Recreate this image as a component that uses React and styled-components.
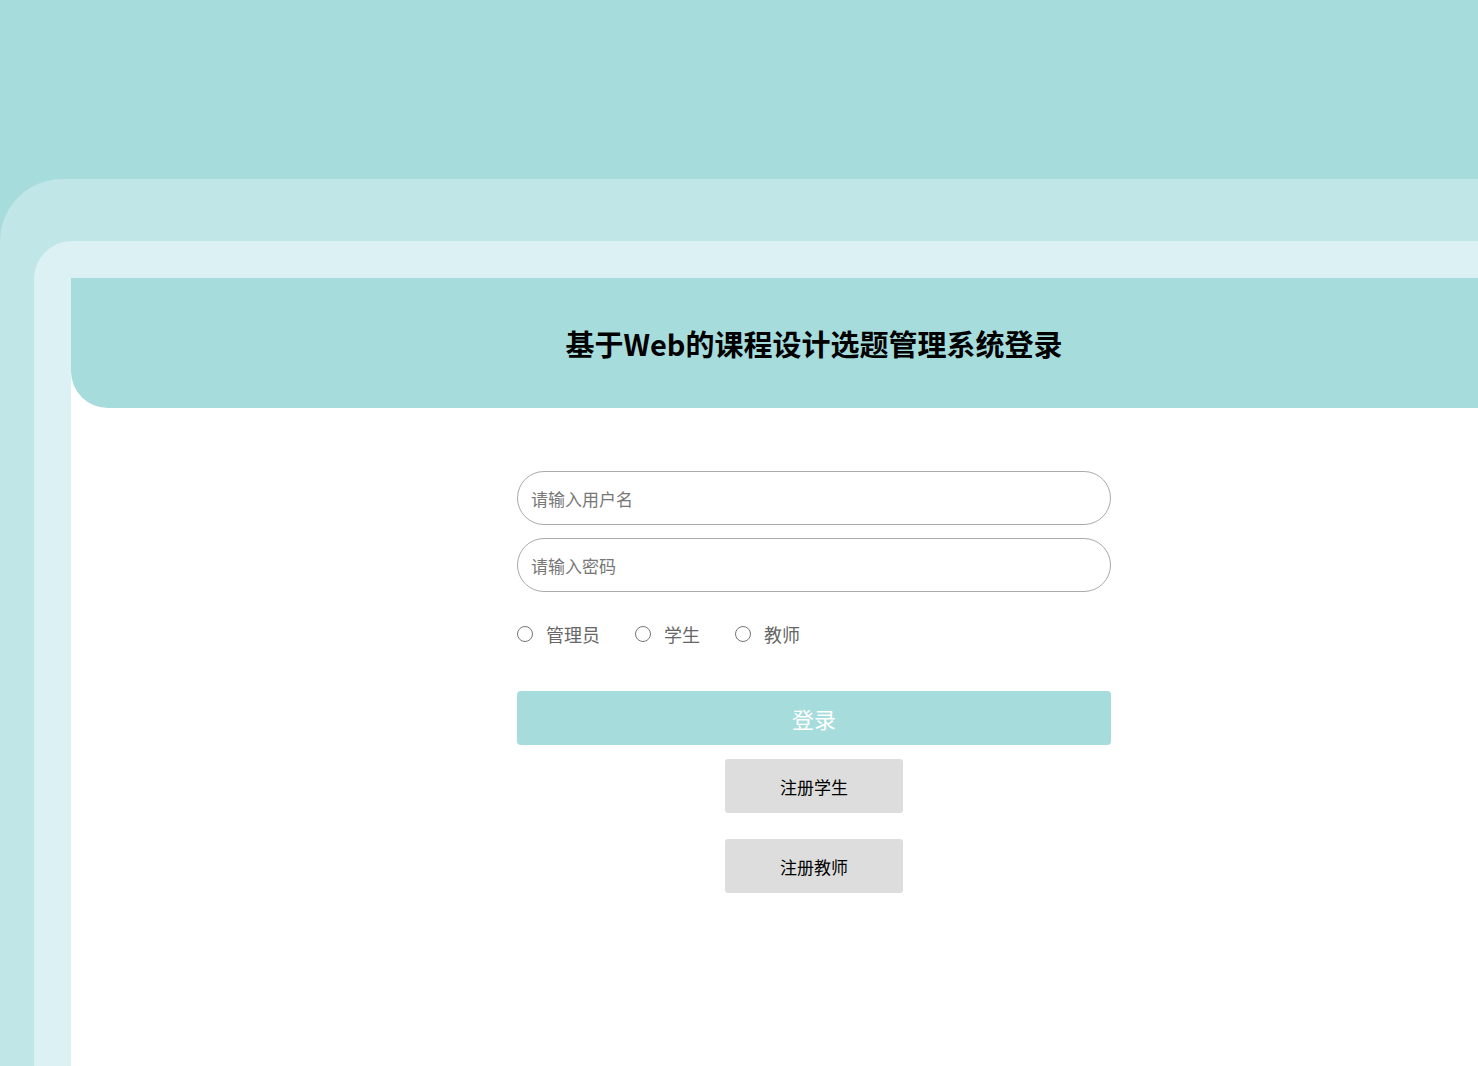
import React, { useState } from 'react';
import styled, { createGlobalStyle } from 'styled-components';

const Global = createGlobalStyle`
  html, body { margin: 0; padding: 0; overflow: hidden; }
  body {
    background: #a6dcdc;
    font-family: "Microsoft YaHei", "Noto Sans CJK SC", "Liberation Sans", sans-serif;
  }
`;

const Page = styled.div`
  width: 1478px;
  height: 1066px;
  overflow: hidden;
  padding-top: 179px;
  box-sizing: border-box;
`;

const Outer = styled.div`
  width: 1600px;
  height: 900px;
  background: #c0e6e7;
  border-top-left-radius: 62px;
  padding: 62px 0 0 34px;
  box-sizing: border-box;
`;

const Inner = styled.div`
  height: 100%;
  background: #dcf1f3;
  border-top-left-radius: 38px;
  padding: 37px 0 0 37px;
  box-sizing: border-box;
`;

const Panel = styled.div`
  width: 1486px;
  height: 100%;
  background: #fff;
`;

const Header = styled.div`
  height: 130px;
  background: #a6dcdc;
  border-bottom-left-radius: 37px;
  display: flex;
  align-items: center;
  justify-content: center;
`;

const Title = styled.h1`
  margin: 0;
  font-size: 29px;
  font-weight: bold;
  color: #000;
`;

const Form = styled.div`
  width: 594px;
  margin: 63px auto 0;
  display: flex;
  flex-direction: column;
`;

const Input = styled.input`
  height: 54px;
  border: 1px solid #aaa;
  border-radius: 27px;
  padding: 0 13px;
  font-size: 17px;
  font-family: inherit;
  margin-bottom: 13px;
  box-sizing: border-box;
  &::placeholder { color: #777; }
  &:focus { outline: none; }
`;

const Radios = styled.div`
  display: flex;
  align-items: center;
  margin-top: 17px;
  height: 24px;
`;

const RadioLabel = styled.label`
  display: flex;
  align-items: center;
  font-size: 18px;
  color: #666;
  margin-right: 35px;
  cursor: pointer;
`;

const Circle = styled.span`
  width: 16px;
  height: 16px;
  border: 1px solid #777;
  border-radius: 50%;
  margin-right: 13px;
  box-sizing: border-box;
  display: flex;
  align-items: center;
  justify-content: center;
  &::after {
    content: '';
    width: 8px;
    height: 8px;
    border-radius: 50%;
    background: ${p => (p.$on ? '#2b7de9' : 'transparent')};
  }
`;

const LoginBtn = styled.button`
  margin-top: 45px;
  height: 54px;
  background: #a6dcdc;
  border: none;
  border-radius: 4px;
  color: #fff;
  font-size: 22px;
  font-family: inherit;
  cursor: pointer;
`;

const RegBtn = styled.button`
  align-self: center;
  width: 178px;
  height: 54px;
  margin-top: ${p => p.$gap}px;
  background: #ddd;
  border: none;
  border-radius: 3px;
  font-size: 17px;
  font-family: inherit;
  color: #000;
  cursor: pointer;
`;

const roles = ['管理员', '学生', '教师'];

export default function App() {
  const [role, setRole] = useState(null);
  return (
    <Page>
      <Global />
      <Outer>
        <Inner>
          <Panel>
            <Header>
              <Title>基于Web的课程设计选题管理系统登录</Title>
            </Header>
            <Form>
              <Input placeholder="请输入用户名" />
              <Input type="password" placeholder="请输入密码" />
              <Radios>
                {roles.map(r => (
                  <RadioLabel key={r} onClick={() => setRole(r)}>
                    <Circle $on={role === r} />
                    {r}
                  </RadioLabel>
                ))}
              </Radios>
              <LoginBtn>登录</LoginBtn>
              <RegBtn $gap={14}>注册学生</RegBtn>
              <RegBtn $gap={26}>注册教师</RegBtn>
            </Form>
          </Panel>
        </Inner>
      </Outer>
    </Page>
  );
}
